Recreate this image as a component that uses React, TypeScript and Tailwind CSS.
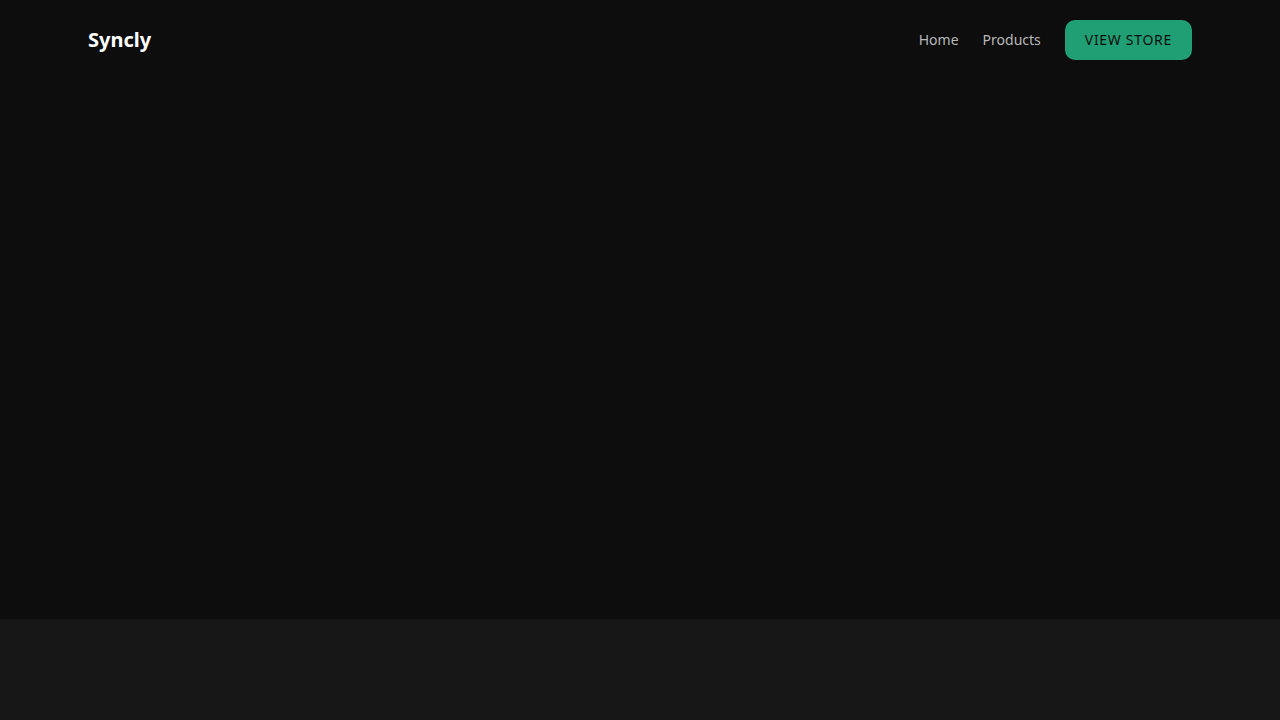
import { useState } from "react";

const links = [
  { label: "Home", href: "#home" },
  { label: "Products", href: "#products" },
];

function Navbar({ onViewStore }: { onViewStore: () => void }) {
  return (
    <header className="w-full">
      <div className="mx-auto flex h-20 max-w-6xl items-center justify-between px-6">
        <a href="#home" className="text-xl font-bold text-white">
          Syncly
        </a>

        <nav className="flex items-center gap-6">
          {links.map((link) => (
            <a
              key={link.href}
              href={link.href}
              className="text-sm text-[#b8b8b8] transition-colors hover:text-white"
            >
              {link.label}
            </a>
          ))}
          <button
            onClick={onViewStore}
            className="h-10 rounded-[10px] bg-[#1f9f73] px-5 text-sm tracking-wider text-[#0d0d0d] uppercase transition-colors hover:bg-[#23b482]"
          >
            View Store
          </button>
        </nav>
      </div>
    </header>
  );
}

export default function App() {
  const [storeOpen, setStoreOpen] = useState(false);

  return (
    <div className="flex min-h-screen flex-col bg-[#0d0d0d] font-['Noto_Sans',sans-serif]">
      <Navbar onViewStore={() => setStoreOpen(!storeOpen)} />
      <main id="home" className="flex-1" />
      <section id="products" className="h-[101px] bg-[#171717]">
        <div className="mx-auto max-w-6xl px-6" />
      </section>
    </div>
  );
}
